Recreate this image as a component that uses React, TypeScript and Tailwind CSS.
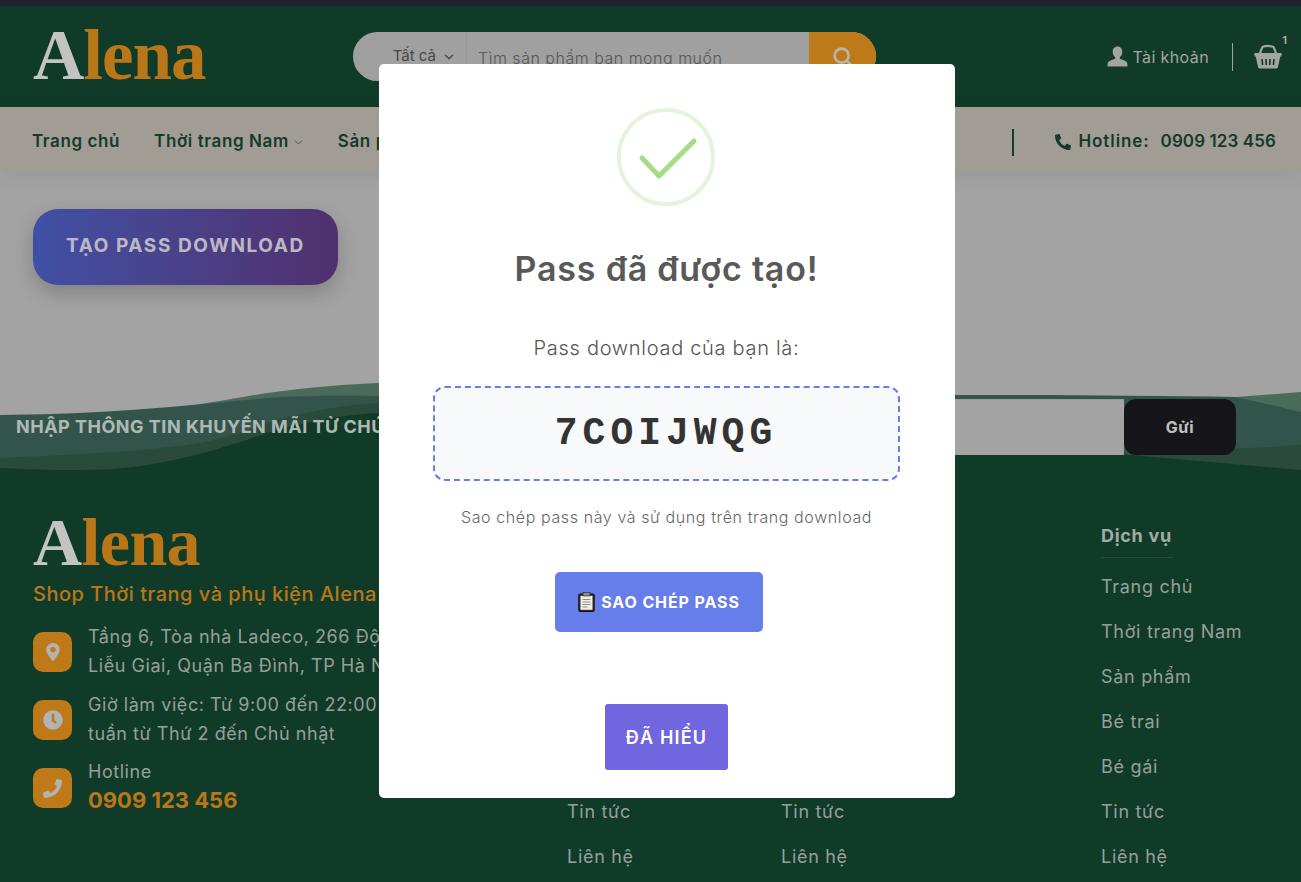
import { ChevronDown, Search } from 'lucide-react'
import { FaClock, FaMapMarkerAlt, FaPhoneAlt } from 'react-icons/fa'

const footerLinks = ['Trang chủ', 'Thời trang Nam', 'Sản phẩm', 'Bé trai', 'Bé gái', 'Tin tức', 'Liên hệ']

function Logo({ small }: { small?: boolean }) {
  return (
    <div
      className={`font-['Liberation_Serif',serif] font-bold ${small ? 'text-[68px] leading-[68px] tracking-[-0.600px]' : 'text-[71px] leading-[71px] tracking-[-1px]'}`}
    >
      <span className="text-[#f4f4f4]">A</span>
      <span className="text-[#e8951f]">lena</span>
    </div>
  )
}

function UserIcon() {
  return (
    <svg width="21" height="21" viewBox="0 0 21 21" className="text-[#cecec8]">
      <path
        fill="currentColor"
        d="M10.500 0.500c-3 0-4.800 2.300-4.800 5.200 0 2.300 1 4.300 2.400 5.400v1.600c-2.500 1.200-6.600 2-7.300 4.300-.2 1-.3 2-.3 3.500h20c0-1.500-.1-2.500-.3-3.500-.7-2.300-4.800-3.100-7.300-4.300v-1.600c1.400-1.100 2.400-3.100 2.400-5.400 0-2.900-1.800-5.200-4.800-5.200z"
      />
    </svg>
  )
}

function BasketIcon() {
  return (
    <svg width="28" height="25" viewBox="0 0 28 25" className="text-[#cecec8]">
      <path d="M5.500 10 L8.500 3 Q14 0.800 19.500 3 L22.500 10" fill="none" stroke="currentColor" strokeWidth="2.200" />
      <path fill="currentColor" d="M0.500 9h27v3.500h-1.300l-2.200 10.500q-.3 1.500-2 1.500h-16q-1.700 0-2-1.500l-2.200-10.500h-1.300z" />
      <path d="M8 15l.6 6M12 15l.2 6M16 15l-.2 6M20 15l-.6 6" stroke="#154a33" strokeWidth="1.600" />
    </svg>
  )
}

function ClipboardIcon() {
  return (
    <svg width="17" height="20" viewBox="0 0 17 20">
      <rect x="0.800" y="2" width="15.400" height="17.500" rx="1" fill="#3a2a20" stroke="#111" />
      <rect x="2.500" y="3.800" width="12" height="14" fill="#f1efe6" />
      <rect x="5" y="0.500" width="7" height="3.500" fill="#8a8f96" stroke="#222" strokeWidth="0.600" />
      <path d="M4.500 7.500h8M4.500 10h8M4.500 12.500h8M4.500 15h5" stroke="#8f8f8f" strokeWidth="1.100" />
    </svg>
  )
}

function InfoIcon({ children }: { children: React.ReactNode }) {
  return (
    <div className="mt-[10px] flex h-10 w-[39px] shrink-0 items-center justify-center rounded-[10px] bg-[#ee981e] text-[#e0e0e0]">
      {children}
    </div>
  )
}

function LinkColumn({ title, width }: { title: string; width: string }) {
  return (
    <div className={`mt-[16px] shrink-0 tracking-[0.7px] ${width}`}>
      <h4 className="h-[24px] whitespace-nowrap text-[18px] font-bold leading-[24px] text-[#c8d8ce]">{title}</h4>
      <div className="mt-[9px] h-px w-[72px] bg-white/10" />
      <ul className="mt-[16px] flex flex-col gap-[19px]">
        {footerLinks.map((link) => (
          <li key={link} className="h-[26px] whitespace-nowrap text-[18px] leading-[26px] text-[#bcc7c0]">
            {link}
          </li>
        ))}
      </ul>
    </div>
  )
}

export default function App() {
  return (
    <div className="relative h-[882px] w-full overflow-hidden bg-[#cccccc] font-['Inter',sans-serif]">
      <div className="h-[6px] bg-[#222d3c]" />

      <header className="flex h-[101px] items-center bg-[#154a33] pl-[33px] pr-[19px]">
        <div className="w-[320px] shrink-0 pb-[2px]">
          <Logo />
        </div>
        <div className="flex h-[49px] w-[523px] shrink-0 overflow-hidden rounded-[25px] bg-[#c8c8c8]">
          <div className="flex w-[114px] shrink-0 items-center justify-end gap-[6px] border-r border-[#bdbdbd] pr-[10px] text-[15px] text-[#5c5c5c]">
            Tất cả
            <ChevronDown size={14} strokeWidth={2.500} />
          </div>
          <div className="flex flex-1 items-center pl-[11px] pt-[2px] text-[16px] font-light tracking-[0.500px] text-[#6e6e6e]">
            Tìm sản phẩm bạn mong muốn
          </div>
          <div className="flex w-[67px] shrink-0 items-center justify-center bg-[#ee981e] text-[#e4e4e4]">
            <Search size={21} strokeWidth={3} />
          </div>
        </div>
        <div className="ml-auto flex items-center text-[#cecec8]">
          <div className="-ml-[4px]">
            <UserIcon />
          </div>
          <span className="ml-[4px] text-[16px] tracking-[0.4px]">Tài khoản</span>
          <div className="ml-[23px] mr-[21px] h-[28px] w-px bg-[#cecec8]" />
          <div className="relative">
            <BasketIcon />
            <span className="absolute -right-[5px] -top-[12px] text-[11px] font-bold">1</span>
          </div>
        </div>
      </header>

      <nav className="relative z-10 flex h-[64px] items-center bg-[#cac5bb] pl-[32px] pr-[25px] pt-[6px] text-[17px] font-semibold tracking-[0.6px] text-[#194a35] shadow-[0_4px_20px_rgba(0,0,0,0.08)]">
        <span>Trang chủ</span>
        <span className="ml-[34px] flex items-center gap-[3px]">
          Thời trang Nam
          <ChevronDown size={13} strokeWidth={1.200} />
        </span>
        <span className="ml-[33px]">Sản phẩm</span>
        <div className="ml-auto mr-[41px] h-[27px] w-[2px] bg-[#194a35]" />
        <FaPhoneAlt size={16} />
        <span className="ml-[8px] tracking-[0.9px]">Hotline:</span>
        <span className="ml-[11px] tracking-[0.1px]">0909 123 456</span>
      </nav>

      <section className="h-[228px] px-[33px] pt-[38px]">
        <button className="flex h-[76px] w-[305px] items-center justify-center rounded-[25px] bg-gradient-to-r from-[#4f65ce] to-[#643c8a] pb-[2px] text-[19px] font-bold tracking-[1.600px] text-[#ebe7f4] shadow-[0_8px_20px_rgba(0,0,0,0.2)]">
          TẠO PASS DOWNLOAD
        </button>
      </section>

      <div className="relative">
        <svg className="absolute left-0 top-[-16px] z-10 h-[88px] w-full" viewBox="0 0 1301 88" preserveAspectRatio="none">
          <path fill="#5d8673" d="M0 32C60 32 100 32 133 30C190 24 230 16 267 10C310 4 350 1 379 0C600 0 1000 22 1236 14L1301 9V88H0Z" />
          <path fill="#406a5d" d="M0 32C80 32 160 26 267 15C310 12 350 13 379 13C700 13 1000 10 1236 14L1301 29V88H0Z" />
          <path fill="#355d4b" d="M0 75C70 72 150 68 200 60C230 54 250 46 267 40C300 30 340 22 379 20C700 20 1000 40 1131 72C1180 68 1240 66 1301 62V88H0Z" />
          <path fill="#154a33" d="M0 85C40 87 80 88 110 86C170 82 220 66 267 50C300 40 340 32 379 30C600 25 900 60 1131 72L1301 87V88H0Z" />
        </svg>

        <div className="relative z-20 flex h-[56px] items-center pl-[16px]">
          <p className="flex-1 whitespace-nowrap pb-[1px] text-[18px] font-bold tracking-[0.5px] text-[#dce6e1]">
            NHẬP THÔNG TIN KHUYẾN MÃI TỪ CHÚNG TÔI
          </p>
          <div className="h-full w-[524px] border-t border-[#c0c0c0] bg-[#cccccc]" />
          <button className="mr-[65px] h-full w-[112px] rounded-[12px] bg-[#1c1c21] text-[16px] font-bold tracking-[0.5px] text-[#f0f0f0]">
            Gửi
          </button>
        </div>

        <footer className="flex h-[427px] bg-[#154a33] pl-[33px] pt-[53px]">
          <div className="relative z-20 w-[534px] shrink-0">
            <Logo small />
            <p className="mt-[4px] whitespace-nowrap text-[20px] font-medium leading-[28px] tracking-[0.5px] text-[#e8951f]">
              Shop Thời trang và phụ kiện Alena
            </p>
            <div className="mt-[14px] flex flex-col gap-[10px] text-[18px] leading-[29px] tracking-[0.55px] text-[#bcc7c0]">
              <div className="flex gap-[16px]">
                <InfoIcon>
                  <FaMapMarkerAlt size={18} />
                </InfoIcon>
                <p className="whitespace-nowrap">
                  Tầng 6, Tòa nhà Ladeco, 266 Đội Cấn,
                  <br />
                  Liễu Giai, Quận Ba Đình, TP Hà Nội
                </p>
              </div>
              <div className="flex gap-[16px]">
                <InfoIcon>
                  <FaClock size={20} />
                </InfoIcon>
                <p className="whitespace-nowrap">
                  Giờ làm việc: Từ 9:00 đến 22:00 các ngày
                  <br />
                  tuần từ Thứ 2 đến Chủ nhật
                </p>
              </div>
              <div className="flex gap-[16px]">
                <InfoIcon>
                  <FaPhoneAlt size={19} className="-scale-x-100" />
                </InfoIcon>
                <div className="leading-[28px]">
                  <p>Hotline</p>
                  <p className="text-[22px] font-bold tracking-normal text-[#e8951f]">0909 123 456</p>
                </div>
              </div>
            </div>
          </div>
          <LinkColumn title="Về chúng tôi" width="w-[214px]" />
          <LinkColumn title="Chính sách hỗ trợ" width="w-[320px]" />
          <LinkColumn title="Dịch vụ" width="w-[200px]" />
        </footer>
      </div>

      <div className="absolute inset-0 z-30 flex items-start justify-center bg-black/20 pl-[33px] pt-[64px]">
        <div className="flex h-[734px] w-[576px] flex-col items-center rounded-[5px] bg-white pr-[1px]">
          <div className="mr-[1px] mt-[44px] h-[98px] w-[98px]">
            <svg width="98" height="98" viewBox="0 0 98 98">
              <circle cx="49" cy="49" r="47" fill="none" stroke="#a5dc86" strokeOpacity="0.3" strokeWidth="4" />
              <path d="M25 50 L42 68 L77 33" fill="none" stroke="#a5dc86" strokeWidth="5" strokeLinecap="round" strokeLinejoin="round" />
            </svg>
          </div>
          <h2 className="mt-[42px] text-[34px] font-semibold leading-[42px] tracking-[0.8px] text-[#595959]">Pass đã được tạo!</h2>
          <p className="mt-[44px] text-[20px] font-light leading-[28px] tracking-[0.7px] text-[#545454]">Pass download của bạn là:</p>
          <div className="mr-[1px] mt-[24px] flex h-[95px] w-[467px] items-center justify-center rounded-[12px] border-2 border-dashed border-[#667eea] bg-[#f8f9fa] font-['Liberation_Mono',monospace] text-[38px] font-bold tracking-[5px] text-[#333]">
            7COIJWQG
          </div>
          <p className="mt-[25px] text-[16px] font-light leading-[22px] tracking-[0.6px] text-[#666]">
            Sao chép pass này và sử dụng trên trang download
          </p>
          <button className="mr-[15px] mt-[44px] flex h-[60px] w-[208px] items-center justify-center gap-[6px] rounded-[5px] bg-[#667eea] text-[16px] font-bold tracking-[0.9px] text-white">
            <ClipboardIcon />
            SAO CHÉP PASS
          </button>
          <button className="mt-[72px] h-[66px] w-[123px] rounded-[3px] bg-[#7066e0] text-[18px] font-semibold tracking-[1.200px] text-white">
            ĐÃ HIỂU
          </button>
        </div>
      </div>
    </div>
  )
}
